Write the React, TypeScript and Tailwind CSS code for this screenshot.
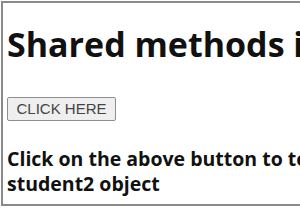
import React from "react";

export default function App() {
  return (
    <div className="w-[300px] h-[210px] overflow-hidden bg-white">
      <div
        className="mt-[1px] ml-[1px] w-[420px] h-[205px] border-t-2 border-l-2 border-b-2 border-[#8a8a8a] pl-[4px] text-[#111]"
        style={{ fontFamily: '"Open Sans", "Noto Sans", sans-serif' }}
      >
        <h1 className="pt-[19px] text-[34px] leading-[44px] font-bold whitespace-nowrap">
          Shared methods in JavaScript
        </h1>
        <button
          className="mt-[31px] h-[24px] w-[109px] rounded-[2px] border border-[#8f8f8f] bg-[#efefef] text-[15px] leading-[18px] text-[#444]"
          style={{ fontFamily: '"Liberation Sans", Arial, sans-serif' }}
        >
          CLICK HERE
        </button>
        <p className="mt-[25px] text-[19.5px] leading-[25px] font-bold whitespace-nowrap">
          Click on the above button to test shared method of
          <br />
          student2 object
        </p>
      </div>
    </div>
  );
}
